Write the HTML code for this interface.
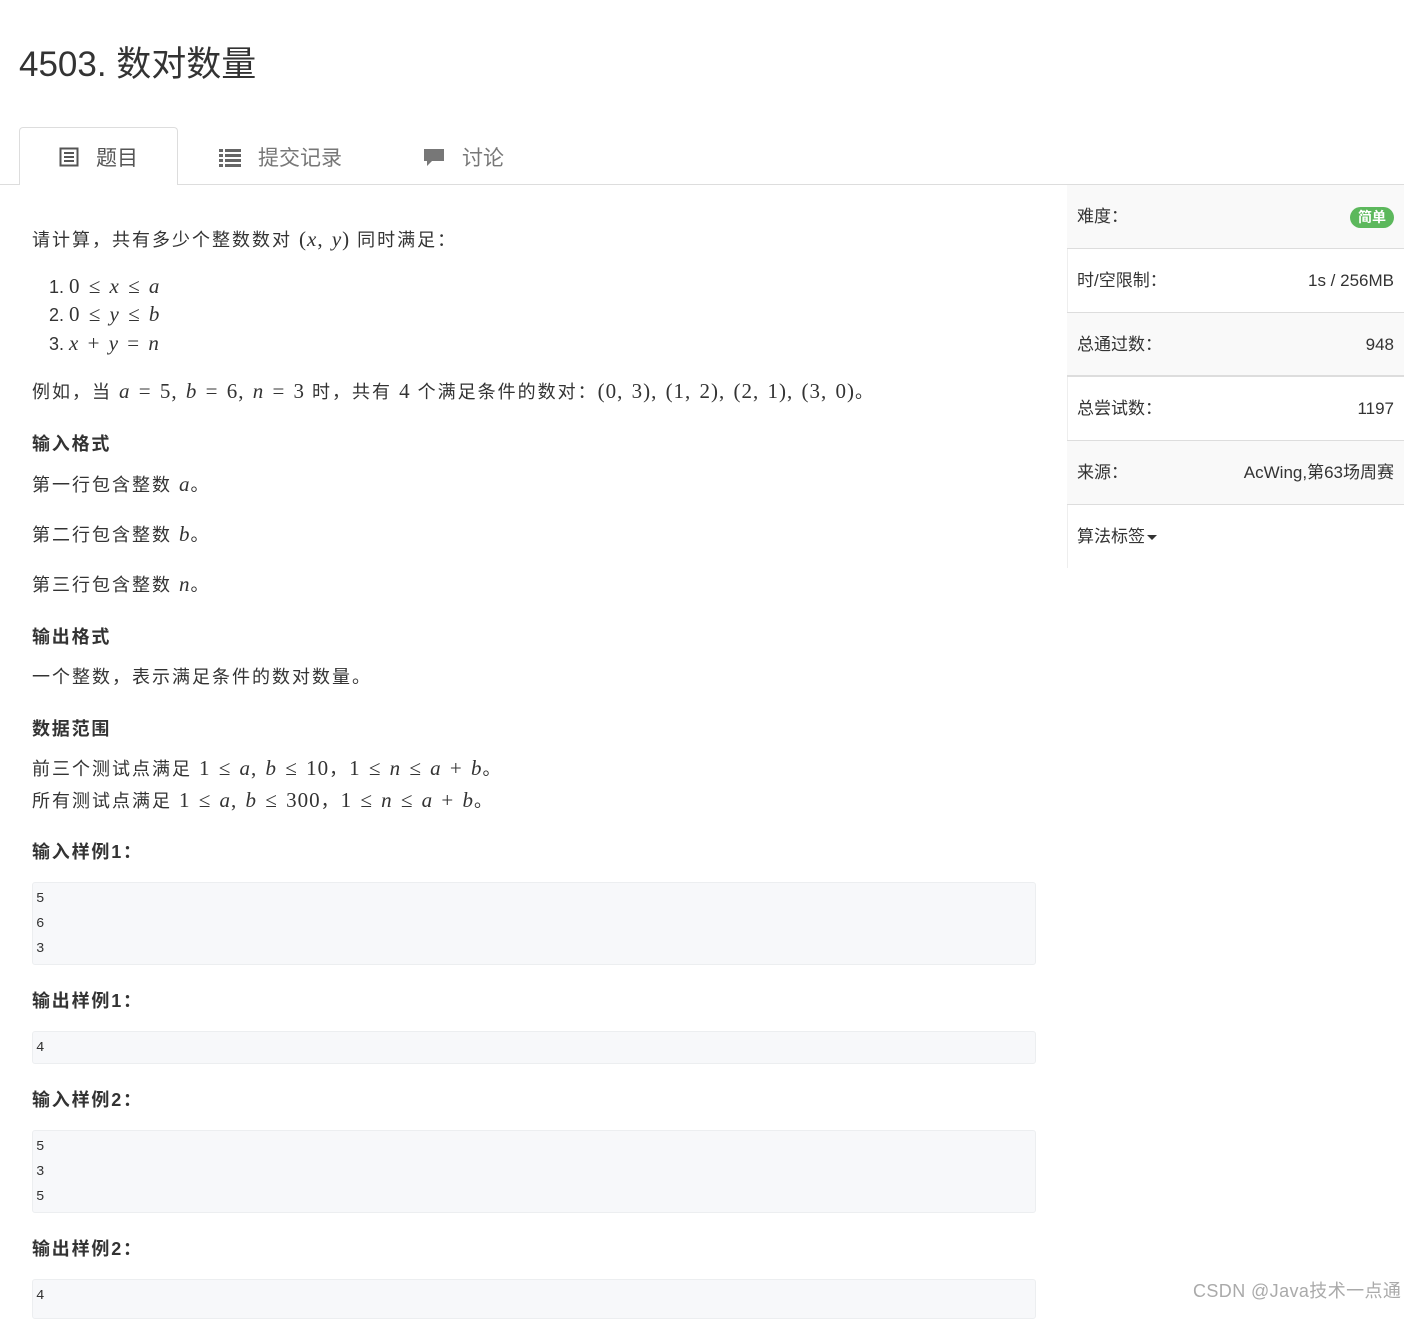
<!DOCTYPE html>
<html><head><meta charset="utf-8"><style>
*{margin:0;padding:0;box-sizing:border-box}
body{width:1418px;height:1309px;background:#fff;position:relative;overflow:hidden;font-family:"Liberation Sans","Noto Sans CJK SC",sans-serif;color:#333}
.a{position:absolute;white-space:nowrap}
.t{font-size:18px;line-height:24px;left:32px;letter-spacing:2px}
.h{font-size:18px;font-weight:bold;left:32px;line-height:24px;letter-spacing:1.8px}
.m{font-family:"Liberation Serif","Noto Serif CJK SC",serif;font-size:21px;letter-spacing:1px;word-spacing:2px}
.i{font-style:italic}
.code{position:absolute;left:32px;width:1004px;background:#f7f8fa;border:1px solid #eceef0;border-radius:3px;font-family:"Liberation Mono",monospace;font-size:14px;line-height:25px;padding:4px 0 0 3px;color:#333}
.row{position:absolute;left:1067px;width:337px;height:64px;border-bottom:1px solid #ddd;font-size:17px;line-height:63px;padding:0 10px}
.row span{float:right}
.g{background:#f9f9f9}
</style></head><body>
<div class="a" style="left:19px;top:42px;font-size:35px;line-height:46px;color:#333">4503. 数对数量</div>

<div class="a" style="left:0;top:184px;width:1404px;border-top:1px solid #ddd"></div>
<div class="a" style="left:19px;top:127px;width:159px;height:58px;border:1px solid #ddd;border-bottom:none;border-radius:4px 4px 0 0;background:#fff"></div>
<svg class="a" style="left:59px;top:147px" width="20" height="20" viewBox="0 0 20 20"><rect x="1.5" y="1.5" width="17" height="17" fill="none" stroke="#555" stroke-width="2"/><rect x="5" y="5" width="10" height="2" fill="#555"/><rect x="5" y="9" width="10" height="2" fill="#555"/><rect x="5" y="13" width="10" height="2" fill="#555"/></svg>
<div class="a" style="left:96px;top:142px;font-size:21px;color:#555">题目</div>
<svg class="a" style="left:219px;top:149px" width="22" height="18" viewBox="0 0 22 18"><g fill="#666"><rect x="0" y="0" width="4" height="3"/><rect x="6" y="0" width="16" height="3"/><rect x="0" y="5" width="4" height="3"/><rect x="6" y="5" width="16" height="3"/><rect x="0" y="10" width="4" height="3"/><rect x="6" y="10" width="16" height="3"/><rect x="0" y="15" width="4" height="3"/><rect x="6" y="15" width="16" height="3"/></g></svg>
<div class="a" style="left:258px;top:142px;font-size:21px;color:#777">提交记录</div>
<svg class="a" style="left:423px;top:148px" width="22" height="20" viewBox="0 0 22 20"><path d="M1 1h20v12H9l-5 5v-5H1z" fill="#777"/></svg>
<div class="a" style="left:462px;top:142px;font-size:21px;color:#777">讨论</div>

<div class="a t" style="top:227px">请计算，共有多少个整数数对 <span class="m">(<i>x</i>, <i>y</i>)</span> 同时满足：</div>
<div class="a t" style="top:274px;left:49px;letter-spacing:0">1. <span class="m">0 ≤ <i>x</i> ≤ <i>a</i></span></div>
<div class="a t" style="top:302px;left:49px;letter-spacing:0">2. <span class="m">0 ≤ <i>y</i> ≤ <i>b</i></span></div>
<div class="a t" style="top:331px;left:49px;letter-spacing:0">3. <span class="m"><i>x</i> + <i>y</i> = <i>n</i></span></div>
<div class="a t" style="top:379px">例如，当 <span class="m"><i>a</i> = 5, <i>b</i> = 6, <i>n</i> = 3</span> 时，共有 <span class="m">4</span> 个满足条件的数对：<span class="m">(0, 3), (1, 2), (2, 1), (3, 0)</span>。</div>
<div class="a h" style="top:432px">输入格式</div>
<div class="a t" style="top:472px">第一行包含整数 <span class="m i">a</span>。</div>
<div class="a t" style="top:522px">第二行包含整数 <span class="m i">b</span>。</div>
<div class="a t" style="top:572px">第三行包含整数 <span class="m i">n</span>。</div>
<div class="a h" style="top:625px">输出格式</div>
<div class="a t" style="top:665px">一个整数，表示满足条件的数对数量。</div>
<div class="a h" style="top:717px">数据范围</div>
<div class="a t" style="top:756px">前三个测试点满足 <span class="m">1 ≤ <i>a</i>, <i>b</i> ≤ 10</span>，<span class="m">1 ≤ <i>n</i> ≤ <i>a</i> + <i>b</i></span>。</div>
<div class="a t" style="top:788px">所有测试点满足 <span class="m">1 ≤ <i>a</i>, <i>b</i> ≤ 300</span>，<span class="m">1 ≤ <i>n</i> ≤ <i>a</i> + <i>b</i></span>。</div>
<div class="a h" style="top:840px">输入样例1：</div>
<div class="code" style="top:882px;height:83px">5<br>6<br>3</div>
<div class="a h" style="top:989px">输出样例1：</div>
<div class="code" style="top:1031px;height:33px">4</div>
<div class="a h" style="top:1088px">输入样例2：</div>
<div class="code" style="top:1130px;height:83px">5<br>3<br>5</div>
<div class="a h" style="top:1237px">输出样例2：</div>
<div class="code" style="top:1279px;height:40px">4</div>

<div class="a" style="left:1067px;top:185px;height:383px;border-left:1px solid #eee"></div>
<div class="row g" style="top:185px">难度：<span><b style="display:inline-block;background:#5cb85c;color:#fff;font-size:14px;line-height:21px;padding:0 8px;border-radius:11px;vertical-align:middle">简单</b></span></div>
<div class="row" style="top:249px">时/空限制：<span>1s / 256MB</span></div>
<div class="row g" style="top:313px;border-bottom:2px solid #ddd">总通过数：<span>948</span></div>
<div class="row" style="top:377px">总尝试数：<span>1197</span></div>
<div class="row g" style="top:441px">来源：<span>AcWing,第63场周赛</span></div>
<div class="row" style="top:505px;border:none">算法标签<span style="float:none;display:inline-block;width:0;height:0;border-left:5px solid transparent;border-right:5px solid transparent;border-top:5px solid #333;vertical-align:middle;margin-left:2px"></span></div>

<div class="a" style="left:1193px;top:1277px;font-size:18px;color:#aaa;letter-spacing:0.4px">CSDN @Java技术一点通</div>
</body></html>
